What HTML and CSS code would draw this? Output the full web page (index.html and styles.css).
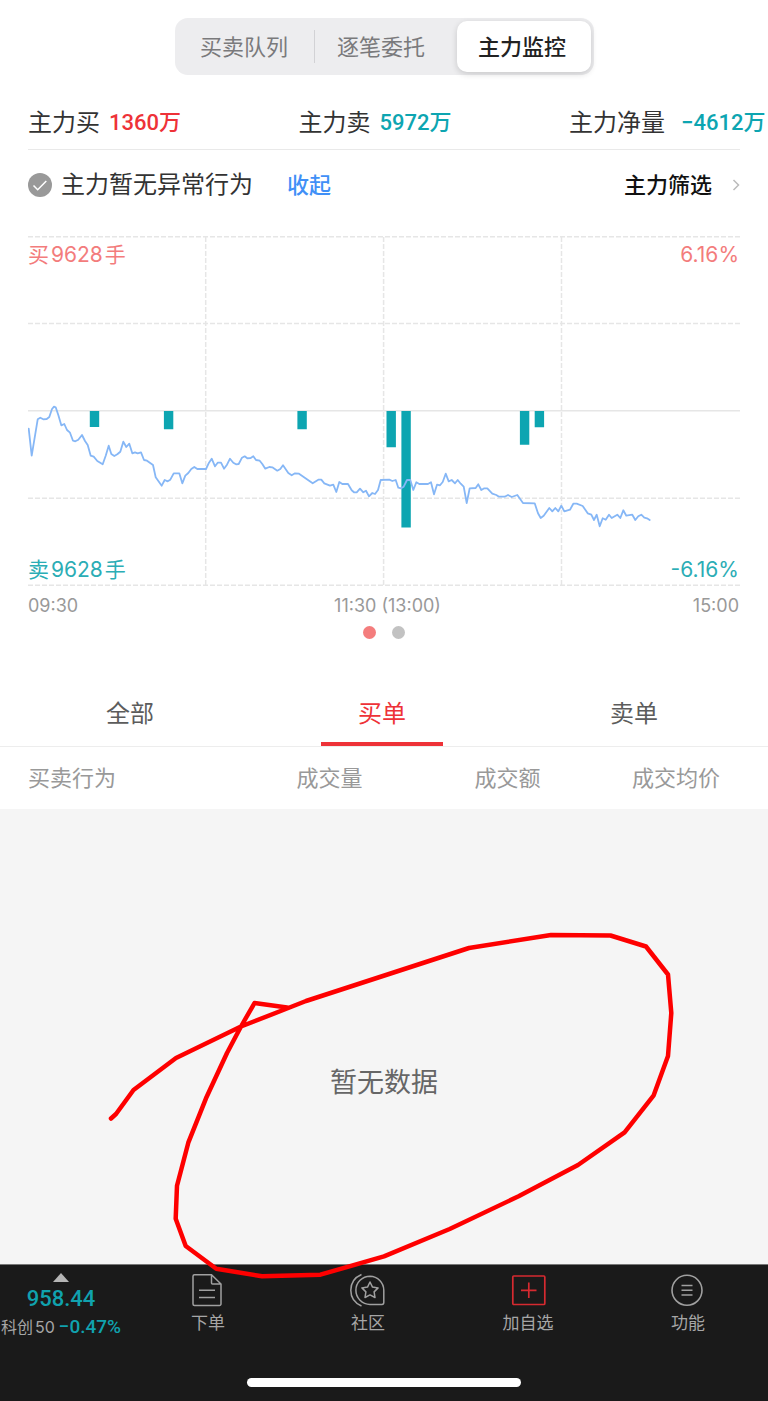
FILE: index.html
```html
<!DOCTYPE html>
<html lang="zh-CN">
<head>
<meta charset="utf-8">
<meta name="viewport" content="width=device-width, initial-scale=1">
<title>主力监控</title>
<link rel="stylesheet" href="styles.css">
</head>
<body>
<div class="page">
  <nav class="segments">
    <button class="segment" type="button">买卖队列</button>
    <span class="segment-divider"></span>
    <button class="segment" type="button">逐笔委托</button>
    <button class="segment segment-active" type="button">主力监控</button>
  </nav>

  <section class="stats">
    <div class="stat"><span>主力买</span><strong class="num up">1360万</strong></div>
    <div class="stat"><span>主力卖</span><strong class="num down">5972万</strong></div>
    <div class="stat stat-net"><span>主力净量</span><strong class="num down">−4612万</strong></div>
  </section>

  <section class="notice">
    <svg class="notice-icon" viewBox="0 0 24 24"><circle cx="12" cy="12" r="12" fill="#999"/><path d="M5.500 12.500l4.200 4.300 8.600-8.800" fill="none" stroke="#fff" stroke-width="1.500"/></svg>
    <span class="notice-text">主力暂无异常行为</span>
    <button class="collapse" type="button">收起</button>
    <button class="filter" type="button">主力筛选
      <svg class="chevron" viewBox="0 0 8 14"><path d="M1.500 2l5 5-5 5" fill="none" stroke="#bbb" stroke-width="1.500"/></svg>
    </button>
  </section>

  <section class="chart">
    <div class="plot">
      <svg class="plot-canvas" viewBox="28 236 712 350">
        <g fill="none" stroke="#e6e6e6" stroke-width="1.500">
          <path d="M28 410.800H740"/>
          <path stroke-dasharray="5 2" d="M28 236.800H740M28 323.500H740M28 498.300H740M28 585.200H740M205.700 237V585M383.600 237V585M561.500 237V585"/>
        </g>
        <g fill="#0da5b1">
          <path d="M89.800 411h9.400v16h-9.400zM163.900 411h9.400v18.300h-9.400zM297.400 411h9.400v18.300h-9.400zM386.500 411h9.400v36.300h-9.400zM401.400 411h9.400v116.500h-9.400zM519.900 411h9.400v33.700h-9.400zM534.700 411h9.400v16.300h-9.400z"/>
        </g>
        <polyline fill="none" stroke="#86b7f6" stroke-width="1.800" stroke-linejoin="round" stroke-linecap="round" points="28.7,428.7 31.7,455.7 37.7,419.3 40.3,417.7 43.3,419.3 46.7,419 49.3,417 52,409 54,406.7 55.7,407.3 58.3,415 61.3,425.3 64.3,424 67,430 70,432.7 73,440.7 75.3,441.3 78.3,439.7 82,435 85,441 87.7,445 90.7,455.7 93.7,456.7 97.3,461 102.7,464.3 105.7,455.7 108.7,445.7 111.3,454 114.3,456 117.3,454.3 120.3,451.7 123.3,441.7 126.3,447 129.3,443.7 132.3,453.3 135,452.3 137.7,453.3 141,452.3 144,460 147,460.7 153,465 155.7,477.3 161.7,485.7 164.7,480 167.7,481.3 170.3,479.7 173.7,473.3 179.3,473.3 182.3,483.3 185.3,475.7 188.3,473 191.3,469 194.3,467 197.3,469 206,469 209,462.7 211.7,458.7 215,466.3 217.7,462.7 221,462.7 224,468.7 227,464.7 230,458.7 233.3,462.7 236,464.3 238.7,464 242,457.7 244.7,456.3 247.3,458.3 250.7,458 253.3,456.3 256,460 259.7,460.7 262.3,464 265.3,468.7 269.3,467 272.3,467.3 277.3,470.7 280.3,469 283,465.3 288.3,473 291.7,475.3 295,473.3 299,473.7 312.7,483.3 318.3,479.7 321.3,479.7 324.3,483.3 330,485.7 333.3,484.7 336.3,492 339.3,482 342.3,484 348,484 351.7,490.3 354,492.3 356.7,492.3 360,488.7 363.3,492.3 366,490.7 369,496.3 372.3,493 375,494 378,490 380.7,480 389.3,479.7 392.3,481 395.7,480 398.3,487.7 401,488.3 403.7,486.7 407,480 410.3,480 413.3,490 416.3,482.3 419.3,484 428,484 431,482.3 434,494.3 437,484.7 440,485.3 442.7,482 445.7,473.7 448.7,481.3 451.7,480 455,483.3 457.7,480 460.7,483.7 463.7,486.7 466.7,503 469.7,488.3 475.7,488 478.3,484.3 481.3,490 484.3,488.3 487.3,488.3 492.3,493.7 496.3,495 499,496.7 504.7,496.7 508,495 511.7,497 517.3,495 523,503 534.7,503.3 538,513.3 540.7,518 543.7,515.7 549.3,508 552.3,511.3 555.3,508 558.3,511.3 561.3,505.7 564.3,511.3 570,509.7 573.3,503.7 576.7,503.7 582.7,506 587.7,513.3 591.3,514.7 594,520 596.7,514.7 599.7,526.3 602.7,518.3 605.7,519.7 609,514.7 611.7,518 617.3,514.7 620.3,518 623.3,510.3 626.3,515.7 632.3,514.7 635.3,520 638.3,516.3 641.3,514.7 644.3,517.7 647,518.3 649.7,520"/>
      </svg>
      <div class="plot-labels">
        <div class="plot-row plot-buy"><span class="volume">买<b>9628</b>手</span><span class="rate">6.16%</span></div>
        <div class="plot-row plot-sell"><span class="volume">卖<b>9628</b>手</span><span class="rate">-6.16%</span></div>
      </div>
    </div>
    <div class="times"><span>09:30</span><span class="time-mid">11:30 (13:00)</span><span class="time-end">15:00</span></div>
    <div class="dots"><i class="dot dot-active"></i><i class="dot"></i></div>
  </section>

  <nav class="tabs">
    <button class="tab" type="button">全部</button>
    <button class="tab tab-active" type="button">买单</button>
    <button class="tab" type="button">卖单</button>
  </nav>

  <div class="orders">
    <table class="orders-table">
      <thead>
        <tr><th class="col-action">买卖行为</th><th class="col-value">成交量</th><th class="col-value">成交额</th><th class="col-price">成交均价</th></tr>
      </thead>
    </table>
  </div>

  <main class="empty">
    <p class="empty-text">暂无数据</p>
    <svg class="marker" viewBox="0 809 768 480"><polyline fill="none" stroke="#fe0000" stroke-width="4.500" stroke-linejoin="round" stroke-linecap="round" points="111,1118.5 116,1114 133.500,1090 176,1058 241,1026.500 287,1008.500 306,1001 469,948 551,935 610.500,935.500 646,946.500 668,974.500 671.300,1013 668,1056 653.700,1095.300 624.600,1132.300 578,1165 518.600,1196.300 449.700,1229 384,1256.300 320.400,1274.700 262,1276.300 216.300,1268.700 185.700,1246 175.700,1218.700 177,1185.700 188.300,1142.700 206,1098.300 227,1053 241,1026.500 254.500,1003 287,1007.500"/></svg>
  </main>

  <footer class="bottom">
    <div class="bottom-row">
      <button class="quote" type="button">
        <svg class="quote-arrow" viewBox="0 0 16 9"><path d="M8 0l8 9H0z" fill="#b5b5b5"/></svg>
        <span class="num quote-price">958.44</span>
        <span class="quote-line"><span class="quote-name">科创<b>50</b></span><span class="num quote-change">−0.47%</span></span>
      </button>
      <button class="action" type="button">
        <svg class="action-icon" viewBox="0 0 36 36"><g fill="none" stroke="#a0a0a0" stroke-width="1.500"><path d="M21.500 2.800H4.500a1.500 1.500 0 0 0-1.500 1.500V32a1.500 1.500 0 0 0 1.500 1.500H29.500A1.500 1.500 0 0 0 31 32V12zM21.500 2.800V11a1 1 0 0 0 1 1H31M9 18.200h16M9 25.500h16"/></g></svg>
        <span>下单</span>
      </button>
      <button class="action" type="button">
        <svg class="action-icon" viewBox="0 0 36 36"><g fill="none" stroke="#a0a0a0" stroke-width="1.500"><path d="M11.500 2.500C4.500 5.500.800 11.500.800 18.300S4.500 31 11.500 34"/><path d="M20 4.200a14 14 0 1 0 0 28.200H32a1.800 1.800 0 0 0 1.800-1.800V18.300A14 14 0 0 0 20 4.200z"/><path stroke-linejoin="round" d="M20 10l2.500 5.100 5.600.8-4 4 .9 5.600-5-2.600-5 2.600.9-5.600-4-4 5.600-.8z"/></g></svg>
        <span>社区</span>
      </button>
      <button class="action" type="button">
        <svg class="action-icon" viewBox="0 0 36 36"><g fill="none" stroke="#d62a30" stroke-width="1.700"><rect x="2.800" y="4" width="32" height="28.500" rx="1"/><path d="M11 18.300h15.500M18.800 10.500V26"/></g></svg>
        <span>加自选</span>
      </button>
      <button class="action" type="button">
        <svg class="action-icon" viewBox="0 0 36 36"><g fill="none" stroke="#a0a0a0" stroke-width="1.600"><circle cx="17" cy="18.300" r="15"/><path d="M11.500 13.500h11M11.500 18.300h11M11.500 23h11"/></g></svg>
        <span>功能</span>
      </button>
    </div>
    <div class="home-bar"></div>
  </footer>
</div>
</body>
</html>
```
FILE: styles.css
```css
* {
  box-sizing: border-box;
}

body {
  margin: 0;
  background: #fff;
  color: #333;
  font-family: Inter, "Noto Sans CJK SC", sans-serif;
  line-height: 1.4;
}

button {
  margin: 0;
  padding: 0;
  border: 0;
  background: none;
  color: inherit;
  font: inherit;
  white-space: nowrap;
}

svg {
  display: block;
}

b {
  font-weight: 400;
}

.page {
  display: flex;
  flex-direction: column;
  min-height: 100vh;
  overflow: hidden;
}

.num {
  font-family: Roboto, "Noto Sans CJK SC", sans-serif;
  font-weight: 500;
}

.up {
  color: #ee3238;
}

.down {
  color: #0da5b1;
}

/* Segmented control */
.segments {
  display: flex;
  align-items: center;
  align-self: center;
  margin-top: 18px;
  padding: 3px;
  border-radius: 13px;
  background: #ededef;
}

.segment {
  width: 136px;
  height: 51px;
  padding-right: 3px;
  border-radius: 10px;
  color: #7a7a7c;
  font-size: 22px;
  line-height: 50px;
}

.segment-divider {
  width: 1px;
  height: 33px;
  background: #d2d2d5;
}

.segment-active {
  width: 134px;
  margin-left: 6px;
  background: #fff;
  box-shadow: 0 2px 6px rgba(0, 0, 0, 0.16);
  color: #222;
  font-weight: 500;
}

/* Totals */
.stats {
  display: grid;
  grid-template-columns: 38% 38% 24%;
  margin: 21px 28px 0;
  border-bottom: 1px solid #e9e9e9;
}

.stat {
  display: flex;
  align-items: center;
  gap: 9px;
  height: 53px;
  font-size: 24px;
  line-height: 36px;
  white-space: nowrap;
}

.stat-net {
  gap: 16px;
}

.stat .num {
  font-size: 22px;
}

/* Status line */
.notice {
  display: flex;
  align-items: center;
  height: 70px;
  margin: 0 28px;
}

.notice-icon {
  width: 24px;
  height: 24px;
  margin-right: 9px;
}

.notice-text {
  font-size: 24px;
  line-height: 36px;
}

.collapse {
  margin-left: 34px;
  color: #4090f7;
  font-size: 22px;
  font-weight: 500;
}

.filter {
  display: flex;
  align-items: center;
  gap: 20px;
  margin-left: auto;
  color: #111;
  font-size: 22px;
  font-weight: 500;
}

.chevron {
  width: 8px;
  height: 14px;
}

/* Chart */
.chart {
  margin: 16px 28px 0;
}

.plot {
  display: grid;
}

.plot-canvas,
.plot-labels {
  grid-area: 1 / 1;
  width: 100%;
}

.plot-labels {
  display: flex;
  flex-direction: column;
  justify-content: space-between;
  padding: 5px 1px 2px 0;
}

.plot-row {
  display: flex;
  justify-content: space-between;
  font-size: 21px;
  line-height: 28px;
}

.plot-buy {
  color: #f37c7c;
}

.plot-sell {
  color: #2badb5;
}

.volume {
  display: flex;
  gap: 2px;
}

.times {
  display: grid;
  grid-template-columns: 1fr auto 1fr;
  padding: 8px 1px 0 0;
  color: #999;
  font-size: 18px;
  line-height: 24px;
}

.time-mid {
  padding-left: 8px;
}

.time-end {
  text-align: right;
}

.dots {
  display: flex;
  justify-content: center;
  gap: 16px;
  padding-top: 8px;
}

.dot {
  width: 13px;
  height: 13px;
  border-radius: 50%;
  background: #c2c2c2;
}

.dot-active {
  background: #f47d7d;
}

/* Order tabs */
.tabs {
  display: grid;
  grid-template-columns: repeat(3, 1fr);
  margin-top: 40px;
  padding: 0 8px 0 4px;
  border-bottom: 1px solid #ededed;
}

.tab {
  justify-self: center;
  width: 122px;
  height: 67px;
  padding-top: 6px;
  border-bottom: 4px solid transparent;
  color: #5c5c5c;
  font-size: 24px;
}

.tab-active {
  border-color: #ee3238;
  color: #ee3238;
}

.orders {
  padding: 0 28px;
}

.orders-table {
  width: 100%;
  table-layout: fixed;
  border-collapse: collapse;
}

.orders-table th {
  height: 62px;
  padding: 0;
  color: #999;
  font-size: 22px;
  font-weight: 400;
  text-align: right;
}

.orders-table .col-action {
  width: 22%;
  text-align: left;
}

.orders-table .col-value {
  width: 25%;
}

.orders-table .col-price {
  padding-right: 20px;
}

/* Empty list */
.empty {
  position: relative;
  display: flex;
  flex: 1;
  align-items: center;
  justify-content: center;
  min-height: 320px;
  padding-top: 93px;
  background: #f5f5f5;
}

.empty-text {
  margin: 0;
  color: #666;
  font-size: 27px;
}

.marker {
  position: absolute;
  top: 0;
  left: 0;
  z-index: 1;
  width: 100%;
  pointer-events: none;
}

/* Bottom bar */
.bottom {
  padding-bottom: 14px;
  border-top: 1px solid #777;
  background: #1a1a1a;
  color: #a6a6a6;
}

.bottom-row {
  display: grid;
  grid-template-columns: 128px repeat(4, 1fr);
  height: 113px;
}

.quote {
  display: flex;
  flex-direction: column;
  align-items: center;
  align-self: start;
  width: 122px;
  padding-top: 8px;
}

.quote-arrow {
  width: 16px;
  height: 9px;
}

.quote-price {
  color: #10a2ae;
  font-size: 22px;
  line-height: 34px;
}

.quote-line {
  display: flex;
  align-items: center;
  gap: 4px;
  line-height: 22px;
}

.quote-name {
  display: flex;
  gap: 2px;
  font-size: 16px;
}

.quote-change {
  color: #10a2ae;
  font-size: 19px;
}

.action {
  display: flex;
  flex-direction: column;
  align-items: center;
  align-self: start;
  padding-top: 7px;
  font-size: 17px;
  line-height: 30px;
}

.action-icon {
  width: 36px;
  height: 36px;
}

.home-bar {
  width: 274px;
  height: 9px;
  margin: 0 auto;
  border-radius: 5px;
  background: #fff;
}
```
